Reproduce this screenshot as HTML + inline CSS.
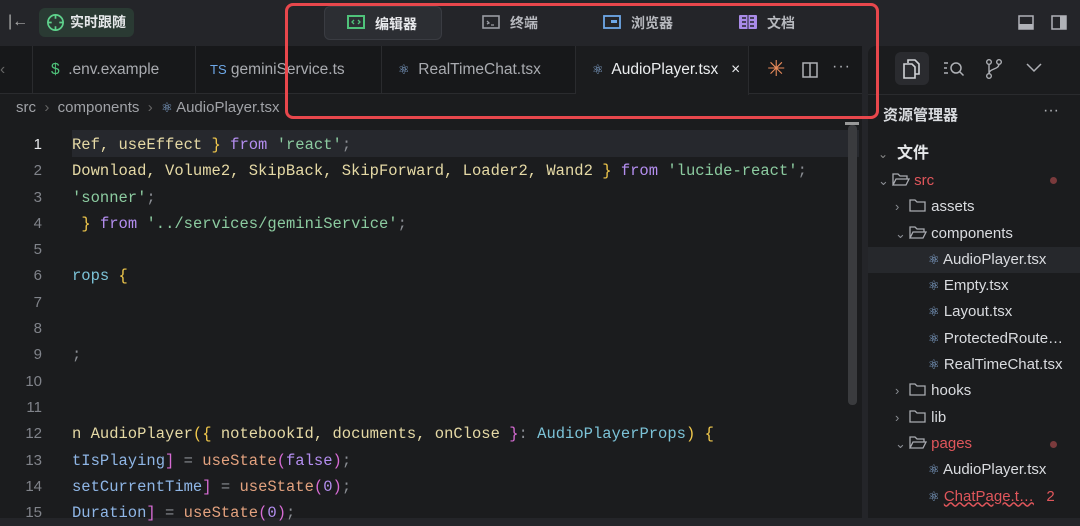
<!DOCTYPE html>
<html><head><meta charset="utf-8"><style>
*{margin:0;padding:0;box-sizing:border-box}
body{width:1080px;height:518px;overflow:hidden;background:#242529;font-family:"Liberation Sans","Noto Sans CJK SC",sans-serif;position:relative;color:#c9cbd0}
.abs{position:absolute}
.top{left:0;top:0;width:1080px;height:46px;background:#242529}
.follow{left:39px;top:8px;width:95px;height:29px;background:#2a3a33;border-radius:6px;color:#e6e8ea;font-size:14px;font-weight:bold;line-height:29px;padding-left:31px}
.seg{top:6px;height:34px;font-size:14px;line-height:34px;color:#b7b9be;font-weight:bold}
.seg.act{background:#2c2e33;border:1px solid #3a3c42;border-radius:6px;color:#e8e9ec}
.ed{left:0;top:46px;width:862px;height:472px;background:#1b1c1e;border-radius:0 8px 0 0}
.tabs{left:0;top:46px;width:862px;height:48px;background:#17181a;border-bottom:1px solid #2a2b2e}
.tab{top:46px;height:48px;line-height:48px;font-size:15.5px;color:#a9abb0;border-right:1px solid #2a2b2e}
.crumb{left:16px;top:99px;font-size:15px;color:#a0a2a7}
.code{font-family:"Liberation Mono",monospace;font-size:15.5px;white-space:pre}
.ln{left:0;width:42px;text-align:right;color:#80838a;font-size:15px;font-family:"Liberation Sans",sans-serif}
.y{color:#e5d9a5}.k{color:#b48ef0}.s{color:#8ccba0}.b{color:#f2c94c}.p{color:#8fb6e6}.o{color:#e3a27f}.c{color:#8a8d93}.m{color:#d66bd3}.t{color:#7cc3d8}
.side{left:868px;top:46px;width:212px;height:472px;background:#1b1c1e;border-radius:8px 0 0 0}
.tr{font-size:15px;color:#dadce0;height:26.3px;line-height:26.3px;white-space:nowrap}
.tr svg{vertical-align:-2px}
.red{color:#e0565b}
.ch{display:inline-block;width:14px;color:#8a8d93;font-size:13px}
</style></head><body>
<div class="abs top"></div>
<div class="abs" style="left:8px;top:13px;color:#aaa;font-size:16px">|←</div>
<div class="abs follow">实时跟随</div>
<svg class="abs" style="left:46px;top:13px" width="19" height="19" viewBox="0 0 20 20"><circle cx="10" cy="10" r="8" fill="none" stroke="#5fd28c" stroke-width="1.8"/><path d="M10 2v4M10 14v4M2 10h4M14 10h4" stroke="#5fd28c" stroke-width="1.8"/></svg>

<div class="abs seg act" style="left:324px;width:118px;padding-left:50px">编辑器</div>
<svg class="abs" style="left:347px;top:15px" width="18" height="14"><rect x="1" y="1" width="16" height="12" fill="none" stroke="#4fc27a" stroke-width="2"/><path d="M7 5l-2 2 2 2M11 5l2 2-2 2" stroke="#4fc27a" stroke-width="1.3" fill="none"/></svg>
<div class="abs seg" style="left:510px">终端</div>
<svg class="abs" style="left:482px;top:15px" width="18" height="14"><rect x="1" y="1" width="16" height="12" fill="none" stroke="#9a9ca3" stroke-width="1.6"/><path d="M5 6l2 2-2 1M9 10h3" stroke="#9a9ca3" stroke-width="1.3" fill="none"/></svg>
<div class="abs seg" style="left:631px">浏览器</div>
<svg class="abs" style="left:603px;top:15px" width="18" height="14"><rect x="1" y="1" width="16" height="12" fill="none" stroke="#6ea8e8" stroke-width="1.8"/><rect x="8" y="5" width="6" height="3" fill="#6ea8e8"/></svg>
<div class="abs seg" style="left:767px">文档</div>
<svg class="abs" style="left:739px;top:15px" width="18" height="14"><rect x="0" y="0" width="18" height="14" rx="1" fill="#a98be8"/><path d="M3 3h4M3 7h4M3 11h4M11 3h4M11 7h4M11 11h4" stroke="#242529" stroke-width="1.5"/><path d="M9 0v14" stroke="#242529"/></svg>
<svg class="abs" style="left:1018px;top:15px" width="16" height="15"><rect x="1" y="1" width="14" height="13" fill="none" stroke="#b0b2b7" stroke-width="1.5"/><rect x="1" y="9" width="14" height="5" fill="#b0b2b7"/></svg>
<svg class="abs" style="left:1051px;top:15px" width="16" height="15"><rect x="1" y="1" width="14" height="13" fill="none" stroke="#b0b2b7" stroke-width="1.5"/><rect x="9" y="1" width="6" height="13" fill="#b0b2b7"/></svg>

<div class="abs ed"></div>
<div class="abs tabs"></div>
<div class="abs tab" style="left:0;width:33px;color:#666">‹</div>
<div class="abs tab" style="left:33px;width:163px;padding-left:18px"><span style="color:#4fc27a">$</span>&nbsp; .env.example</div>
<div class="abs tab" style="left:196px;width:186px;padding-left:14px"><span style="color:#6ea8e8;font-size:13px">TS</span> geminiService.ts</div>
<div class="abs tab" style="left:382px;width:194px;padding-left:16px"><span class="p" style="font-size:13px">⚛</span>&nbsp; RealTimeChat.tsx</div>
<div class="abs tab" style="left:576px;width:173px;padding-left:16px;background:#1b1c1e;color:#eceef0;height:49px"><span class="p" style="font-size:13px">⚛</span>&nbsp; AudioPlayer.tsx&nbsp;&nbsp; ×</div>
<div class="abs" style="left:767px;top:58px;color:#e88a5a;font-size:22px;line-height:22px">✳</div>
<svg class="abs" style="left:802px;top:62px" width="16" height="16"><rect x="1" y="1" width="14" height="14" fill="none" stroke="#aeb0b5" stroke-width="1.5"/><path d="M8 1v14" stroke="#aeb0b5" stroke-width="1.5"/></svg>
<div class="abs" style="left:832px;top:58px;color:#aeb0b5;font-size:16px;letter-spacing:1px">···</div>

<div class="abs crumb">src &nbsp;<span style="color:#666">›</span>&nbsp; components &nbsp;<span style="color:#666">›</span>&nbsp; <span class="p" style="font-size:13px">⚛</span> AudioPlayer.tsx</div>

<div class="abs" style="left:72px;top:130px;width:787px;height:27px;background:#26282d"></div>
<div class="abs" style="left:848px;top:125px;width:9px;height:280px;background:#3a3b3e;border-radius:4px"></div>
<div class="abs" style="left:845px;top:122px;width:14px;height:3px;background:#999"></div>

<div class="abs code" style="left:72px;top:132px;line-height:26.3px"><span class="y">Ref, useEffect </span><span class="b">}</span> <span class="k">from</span> <span class="s">'react'</span><span class="c">;</span>
<span class="y">Download, Volume2, SkipBack, SkipForward, Loader2, Wand2 </span><span class="b">}</span> <span class="k">from</span> <span class="s">'lucide-react'</span><span class="c">;</span>
<span class="s">'sonner'</span><span class="c">;</span>
 <span class="b">}</span> <span class="k">from</span> <span class="s">'../services/geminiService'</span><span class="c">;</span>

<span class="t">rops</span> <span class="b">{</span>


<span class="c">;</span>


<span class="y">n AudioPlayer</span><span class="b">({</span> <span class="y">notebookId, documents, onClose</span> <span class="m">}</span><span class="c">:</span> <span class="t">AudioPlayerProps</span><span class="b">)</span> <span class="b">{</span>
<span class="p">tIsPlaying</span><span class="m">]</span> <span class="c">=</span> <span class="o">useState</span><span class="m">(</span><span class="k">false</span><span class="m">)</span><span class="c">;</span>
<span class="p">setCurrentTime</span><span class="m">]</span> <span class="c">=</span> <span class="o">useState</span><span class="m">(</span><span class="k">0</span><span class="m">)</span><span class="c">;</span>
<span class="p">Duration</span><span class="m">]</span> <span class="c">=</span> <span class="o">useState</span><span class="m">(</span><span class="k">0</span><span class="m">)</span><span class="c">;</span></div>
<div class="abs ln" style="top:132px;line-height:26.3px"><span style="color:#e8e9ec">1</span><br>2<br>3<br>4<br>5<br>6<br>7<br>8<br>9<br>10<br>11<br>12<br>13<br>14<br>15</div>

<div class="abs side"></div>
<div class="abs" style="left:895px;top:52px;width:34px;height:33px;background:#2a2b2f;border-radius:6px"></div>
<svg class="abs" style="left:903px;top:59px" width="18" height="20"><path d="M5 4V1h7l4 4v10h-4M1 5h8l3 3v11H1z" fill="none" stroke="#d0d2d6" stroke-width="1.6"/></svg>
<svg class="abs" style="left:943px;top:60px" width="22" height="18"><path d="M1 3h4M1 8h3M1 13h4" stroke="#aeb0b5" stroke-width="1.5"/><circle cx="13" cy="8" r="5" fill="none" stroke="#aeb0b5" stroke-width="1.5"/><path d="M16.5 11.5l4 4" stroke="#aeb0b5" stroke-width="1.5"/></svg>
<svg class="abs" style="left:985px;top:58px" width="18" height="22"><circle cx="4" cy="4" r="2.3" fill="none" stroke="#aeb0b5" stroke-width="1.4"/><circle cx="14" cy="4" r="2.3" fill="none" stroke="#aeb0b5" stroke-width="1.4"/><circle cx="4" cy="18" r="2.3" fill="none" stroke="#aeb0b5" stroke-width="1.4"/><path d="M4 6v10M14 6c0 6-10 4-10 10" stroke="#aeb0b5" stroke-width="1.4" fill="none"/></svg>
<svg class="abs" style="left:1026px;top:63px" width="16" height="10"><path d="M1 1l7 7 7-7" stroke="#aeb0b5" stroke-width="1.5" fill="none"/></svg>
<div class="abs" style="left:868px;top:94px;width:212px;height:1px;background:#2a2b2e"></div>
<div class="abs" style="left:883px;top:104px;font-size:15px;font-weight:bold;color:#dadce0">资源管理器</div>
<div class="abs" style="left:1043px;top:102px;color:#aeb0b5;font-size:16px">···</div>
<div class="abs" style="left:878px;top:139px;font-size:16px;font-weight:bold;color:#e6e8ea"><span style="color:#888;font-weight:normal;font-size:12px">⌄</span>&nbsp; 文件</div>
<div class="abs" style="left:868px;top:247px;width:212px;height:26px;background:#26282c"></div>
<div class="abs" style="left:1050px;top:177px;width:7px;height:7px;border-radius:50%;background:#7a3a3c"></div>
<div class="abs" style="left:1050px;top:441px;width:7px;height:7px;border-radius:50%;background:#7a3a3c"></div>
<div class="abs" style="left:878px;top:168px">
<div class="tr"><span class="ch">⌄</span><svg width="18" height="15"><path d="M1 13V2h5l2 2h7v3M1 13l3-6h13l-3 6z" fill="none" stroke="#a8aab0" stroke-width="1.3"/></svg> <span class="red">src</span></div>
<div class="tr" style="padding-left:17px"><span class="ch">›</span><svg width="18" height="15"><path d="M1 13V2h5l2 2h8v9z" fill="none" stroke="#a8aab0" stroke-width="1.3"/></svg> assets</div>
<div class="tr" style="padding-left:17px"><span class="ch">⌄</span><svg width="18" height="15"><path d="M1 13V2h5l2 2h7v3M1 13l3-6h13l-3 6z" fill="none" stroke="#a8aab0" stroke-width="1.3"/></svg> components</div>
<div class="tr" style="padding-left:50px"><span class="p" style="font-size:13px">⚛</span> AudioPlayer.tsx</div>
<div class="tr" style="padding-left:50px"><span class="p" style="font-size:13px">⚛</span> Empty.tsx</div>
<div class="tr" style="padding-left:50px"><span class="p" style="font-size:13px">⚛</span> Layout.tsx</div>
<div class="tr" style="padding-left:50px"><span class="p" style="font-size:13px">⚛</span> ProtectedRoute…</div>
<div class="tr" style="padding-left:50px"><span class="p" style="font-size:13px">⚛</span> RealTimeChat.tsx</div>
<div class="tr" style="padding-left:17px"><span class="ch">›</span><svg width="18" height="15"><path d="M1 13V2h5l2 2h8v9z" fill="none" stroke="#a8aab0" stroke-width="1.3"/></svg> hooks</div>
<div class="tr" style="padding-left:17px"><span class="ch">›</span><svg width="18" height="15"><path d="M1 13V2h5l2 2h8v9z" fill="none" stroke="#a8aab0" stroke-width="1.3"/></svg> lib</div>
<div class="tr" style="padding-left:17px"><span class="ch">⌄</span><svg width="18" height="15"><path d="M1 13V2h5l2 2h7v3M1 13l3-6h13l-3 6z" fill="none" stroke="#a8aab0" stroke-width="1.3"/></svg> <span class="red">pages</span></div>
<div class="tr" style="padding-left:50px"><span class="p" style="font-size:13px">⚛</span> AudioPlayer.tsx</div>
<div class="tr" style="padding-left:50px"><span class="p" style="font-size:13px">⚛</span> <span class="red" style="text-decoration:underline wavy #e0565b">ChatPage.t…</span> &nbsp;&nbsp;<span class="red">2</span></div>
</div>

<div class="abs" style="left:285px;top:3px;width:594px;height:116px;border:3px solid #e8474c;border-radius:8px"></div>
</body></html>
